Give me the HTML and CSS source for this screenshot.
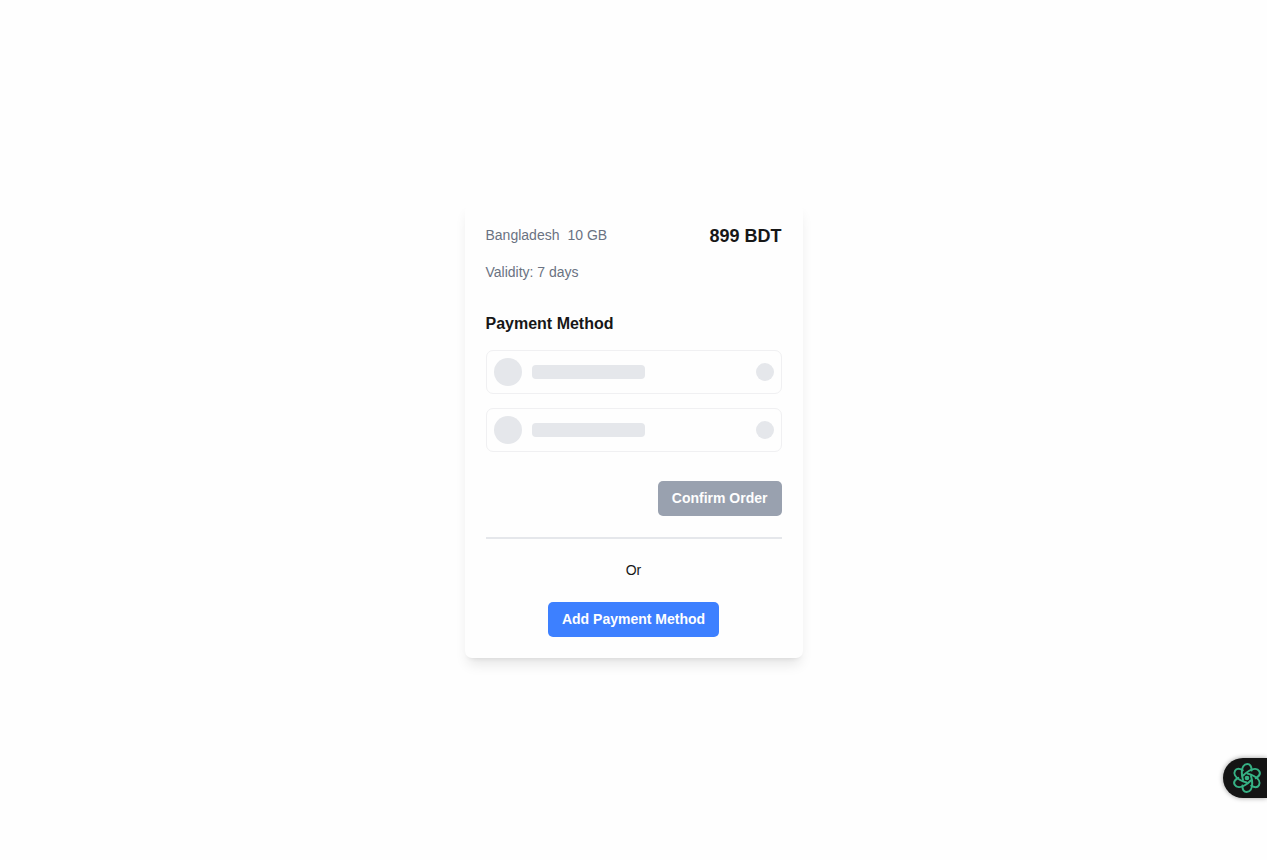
FILE: index.html
```html
<!DOCTYPE html>
<html lang="en">
<head>
<meta charset="utf-8">
<meta name="viewport" content="width=device-width, initial-scale=1">
<title>Payment</title>
<link rel="stylesheet" href="styles.css">
</head>
<body>
<main class="card">
  <div class="summary">
    <p class="muted plan"><span>Bangladesh</span><span>10 GB</span></p>
    <p class="price">899 BDT</p>
  </div>
  <p class="muted validity">Validity: 7 days</p>
  <h2 class="heading">Payment Method</h2>
  <div class="methods" aria-busy="true">
    <div class="method"><span class="avatar"></span><span class="bar"></span><span class="dot"></span></div>
    <div class="method"><span class="avatar"></span><span class="bar"></span><span class="dot"></span></div>
  </div>
  <button class="btn confirm" type="button" disabled>Confirm Order</button>
  <hr class="divider">
  <p class="or">Or</p>
  <button class="btn add" type="button">Add Payment Method</button>
</main>
<button class="assistant" type="button" aria-label="Open assistant">
  <svg class="atom" viewBox="0 0 30 30" fill="none" stroke="#36b184" stroke-width="2" stroke-linecap="round">
    <path id="petal" d="M19.600 7.500C19.600 3.500 17.800 1 15.300 1C12 1 9.800 4.500 9.800 9.500C9.800 12 10.200 14.500 11 17"/>
    <use href="#petal" transform="rotate(60 15 15)"/>
    <use href="#petal" transform="rotate(120 15 15)"/>
    <use href="#petal" transform="rotate(180 15 15)"/>
    <use href="#petal" transform="rotate(240 15 15)"/>
    <use href="#petal" transform="rotate(300 15 15)"/>
    <circle cx="15" cy="15" r="2.300" fill="#36b184" stroke="none"/>
  </svg>
</button>
</body>
</html>
```
FILE: styles.css
```css
* {
  box-sizing: border-box;
}

body {
  margin: 0;
  min-height: 100vh;
  display: flex;
  align-items: center;
  justify-content: center;
  background: #fefefe;
  color: #171717;
  font-family: "Liberation Sans", Arial, sans-serif;
  font-size: 14px;
  line-height: 21px;
}

p,
h2 {
  margin: 0;
}

.card {
  display: flex;
  flex-direction: column;
  width: 100%;
  max-width: 338px;
  padding: 21px;
  border-radius: 7px;
  background: #fefefe;
  box-shadow: 0 9px 13px -3px rgba(0, 0, 0, 0.1), 0 4px 5px -4px rgba(0, 0, 0, 0.1);
}

.summary {
  display: flex;
  align-items: flex-start;
  justify-content: space-between;
}

.muted {
  color: #6a7282;
}

.plan {
  display: flex;
  gap: 8px;
}

.plan,
.price {
  line-height: 25px;
}

.plan {
  line-height: 23px;
}

.price {
  font-size: 18px;
  font-weight: 700;
}

.validity {
  margin-top: 13px;
}

.heading {
  margin-top: 28px;
  font-size: 16px;
  line-height: 25px;
}

.methods {
  display: grid;
  gap: 14px;
  margin-top: 14px;
}

.method {
  display: flex;
  align-items: center;
  gap: 10px;
  padding: 7px;
  border: 1px solid #f0f0f2;
  border-radius: 7px;
}

.avatar,
.bar,
.dot {
  background: #e5e7eb;
}

.avatar {
  width: 28px;
  height: 28px;
  border-radius: 50%;
}

.bar {
  width: 113px;
  height: 14px;
  border-radius: 4px;
}

.dot {
  width: 18px;
  height: 18px;
  margin-left: auto;
  border-radius: 50%;
}

.btn {
  padding: 7px 14px;
  border: 0;
  border-radius: 5px;
  color: #fefefe;
  font: inherit;
  line-height: 21px;
  font-weight: 700;
}

.confirm {
  align-self: flex-end;
  margin-top: 29px;
  background: #99a1af;
}

.divider {
  width: 100%;
  height: 2px;
  margin: 21px 0;
  border: 0;
  background: #e5e7eb;
}

.or {
  text-align: center;
}

.add {
  align-self: center;
  margin-top: 21px;
  background: #3d80ff;
}

.assistant {
  position: fixed;
  right: 0;
  bottom: 62px;
  display: flex;
  align-items: center;
  width: 44px;
  height: 40px;
  padding: 0 0 0 9px;
  border: 0;
  border-radius: 20px 0 0 20px;
  background: #141414;
  box-shadow: 0 0 5px rgba(0, 0, 0, 0.4);
}

.atom {
  flex: none;
  width: 30px;
  height: 30px;
}
```
